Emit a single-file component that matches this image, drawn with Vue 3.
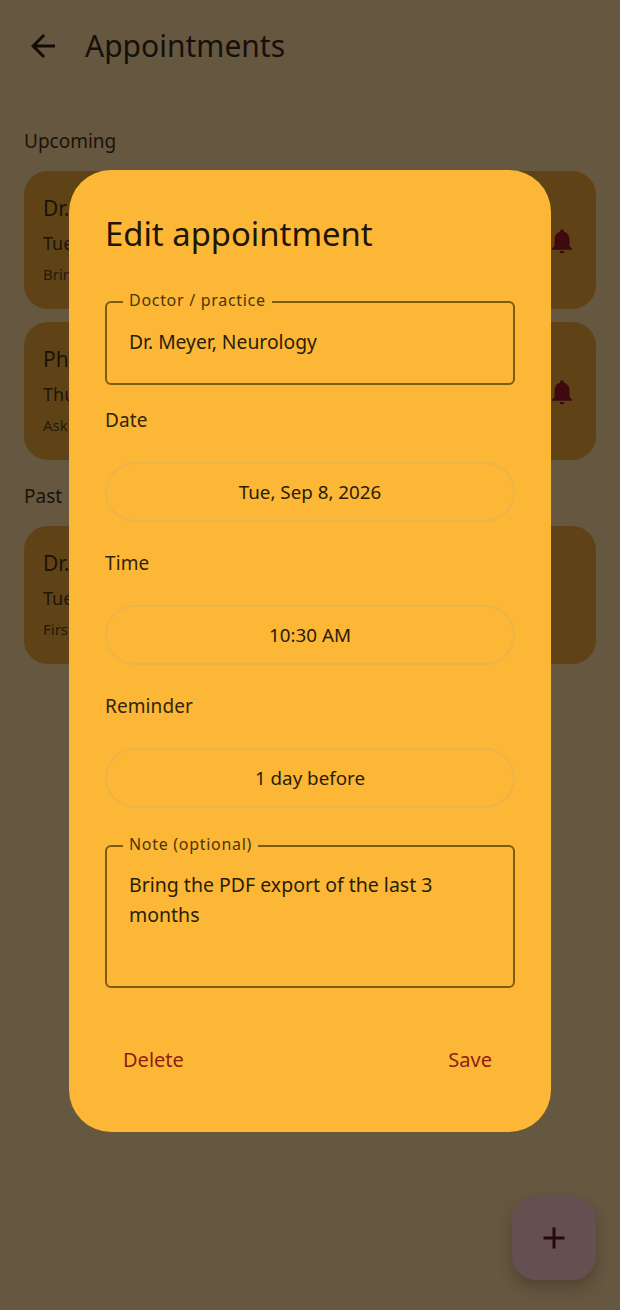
<script setup>
const upcoming = [
  { id: 1, name: 'Dr. Meyer, Neurology', when: 'Tue, Sep 8, 2026 · 10:30 AM', note: 'Bring the PDF export of the last 3 months', bell: true },
  { id: 2, name: 'Physiotherapy', when: 'Thu, Sep 10, 2026 · 2:00 PM', note: 'Ask about new exercises', bell: true },
]
const past = [
  { id: 3, name: 'Dr. Meyer, Neurology', when: 'Tue, Mar 3, 2026 · 9:00 AM', note: 'First follow-up', bell: false },
]
const bell = 'M12 22c1.1 0 2-.9 2-2h-4c0 1.1.89 2 2 2zm6-6v-5c0-3.07-1.64-5.64-4.5-6.32V4c0-.83-.67-1.5-1.5-1.5s-1.5.67-1.5 1.5v.68C7.63 5.36 6 7.92 6 11v5l-2 2v1h16v-1l-2-2z'
const pickers = [
  { label: 'Date', value: 'Tue, Sep 8, 2026' },
  { label: 'Time', value: '10:30 AM' },
  { label: 'Reminder', value: '1 day before' },
]
</script>

<template>
  <div class="page">
    <header class="bar">
      <svg class="back" viewBox="0 0 24 24" width="36" height="36"><path d="M20 11H7.83l5.59-5.59L12 4l-8 8 8 8 1.41-1.41L7.83 13H20v-2z" /></svg>
      <h1>Appointments</h1>
    </header>
    <main class="list">
      <h2>Upcoming</h2>
      <div class="cards">
        <article v-for="a in upcoming" :key="a.id" class="card">
          <div class="card-text">
            <div class="c-name">{{ a.name }}</div>
            <div class="c-when">{{ a.when }}</div>
            <div class="c-note">{{ a.note }}</div>
          </div>
          <svg v-if="a.bell" class="bell" viewBox="0 0 24 24" width="30" height="30"><path :d="bell" /></svg>
        </article>
      </div>
      <h2 class="past">Past</h2>
      <div class="cards">
        <article v-for="a in past" :key="a.id" class="card">
          <div class="card-text">
            <div class="c-name">{{ a.name }}</div>
            <div class="c-when">{{ a.when }}</div>
            <div class="c-note">{{ a.note }}</div>
          </div>
        </article>
      </div>
    </main>
    <button class="fab">
      <svg viewBox="0 0 24 24" width="36" height="36"><path d="M19 13h-6v6h-2v-6H5v-2h6V5h2v6h6v2z" /></svg>
    </button>

    <div class="scrim">
      <section class="dialog">
        <h3>Edit appointment</h3>
        <div class="outlined">
          <span class="float">Doctor / practice</span>
          <div class="value">Dr. Meyer, Neurology</div>
        </div>
        <div v-for="p in pickers" :key="p.label" class="picker">
          <div class="p-label">{{ p.label }}</div>
          <div class="pill">{{ p.value }}</div>
        </div>
        <div class="outlined note">
          <span class="float">Note (optional)</span>
          <div class="value">Bring the PDF export of the last 3 months</div>
        </div>
        <div class="actions">
          <button class="act">Delete</button>
          <button class="act">Save</button>
        </div>
      </section>
    </div>
  </div>
</template>

<style>
html, body { margin: 0; background: #655740; }
</style>

<style scoped>
.page {
  position: relative;
  width: 620px;
  height: 1310px;
  overflow: hidden;
  background: #655740;
  font-family: "Noto Sans", "Open Sans", sans-serif;
  color: #1a1206;
}
.bar { display: flex; align-items: center; height: 90px; padding-left: 25px; gap: 24px; }
.back { fill: #120d06; flex: none; position: relative; top: 1px; }
h1 { margin: 0; font-size: 30px; font-weight: 400; color: #15100a; }
.list { padding: 37px 24px 0; }
h2 { margin: 0 0 16px; font-size: 19px; font-weight: 400; line-height: 28px; color: #1a1408; }
.past { margin: 22px 0 16px; }
.cards { display: flex; flex-direction: column; gap: 13px; }
.card {
  height: 138px;
  box-sizing: border-box;
  border-radius: 24px;
  background: #5f4317;
  padding: 18px 19px 20px;
  display: flex;
  align-items: center;
  justify-content: space-between;
}
.c-name { font-size: 21px; line-height: 30px; color: #1a1305; }
.c-when { font-size: 18px; line-height: 26px; margin-top: 7px; color: #1d1508; }
.c-note { font-size: 15px; line-height: 22px; margin-top: 7px; color: #241a09; }
.bell { fill: #3f0a0e; flex: none; position: relative; top: 2px; }
.fab {
  position: absolute;
  right: 24px;
  bottom: 30px;
  width: 84px;
  height: 84px;
  border: 0;
  border-radius: 24px;
  background: #645050;
  box-shadow: 0 8px 14px rgba(40, 30, 15, 0.3);
  display: flex;
  align-items: center;
  justify-content: center;
  padding: 0;
}
.fab svg { fill: #26080e; }
.scrim {
  position: absolute;
  inset: 0;
  display: flex;
  justify-content: center;
  align-items: flex-start;
  padding-top: 170px;
}
.dialog {
  width: 482px;
  height: 962px;
  box-sizing: border-box;
  background: #fcb737;
  border-radius: 42px;
  padding: 0 36px;
  display: flex;
  flex-direction: column;
}
h3 { margin: 42px 0 0; font-size: 32.8px; line-height: 44px; font-weight: 400; color: #1f1505; }
.outlined {
  position: relative;
  box-sizing: border-box;
  margin-top: 45px;
  height: 84px;
  border: 2px solid #7c5c0e;
  border-radius: 6px;
  padding: 24px 22px 0;
}
.float {
  position: absolute;
  left: 16px;
  top: -14px;
  padding: 0 6px;
  background: #fcb737;
  font-size: 16px;
  letter-spacing: 0.7px;
  line-height: 22px;
  color: #4a3608;
}
.value { font-size: 19.3px; line-height: 30px; color: #2a1d07; }
.picker { display: flex; flex-direction: column; }
.p-label { margin-top: 28px; font-size: 19px; letter-spacing: 0.1px; line-height: 26px; color: #33250a; }
.picker:nth-of-type(2) .p-label { margin-top: 22px; }
.pill {
  margin-top: 29px;
  height: 60px;
  box-sizing: border-box;
  border: 2px solid #ebb349;
  border-radius: 30px;
  display: flex;
  align-items: center;
  justify-content: center;
  padding-bottom: 1px;
  font-size: 18.8px;
  color: #2a1d07;
}
.note { margin-top: 37px; height: 143px; padding-top: 23px; }
.note .value { padding-right: 30px; font-size: 19.5px; }
.actions { display: flex; justify-content: space-between; margin-top: 57px; }
.act {
  border: 0;
  background: none;
  padding: 0 23px 0 18px;
  font: 400 20px/30px "Noto Sans", "Open Sans", sans-serif;
  color: #8f1d12;
}
</style>
